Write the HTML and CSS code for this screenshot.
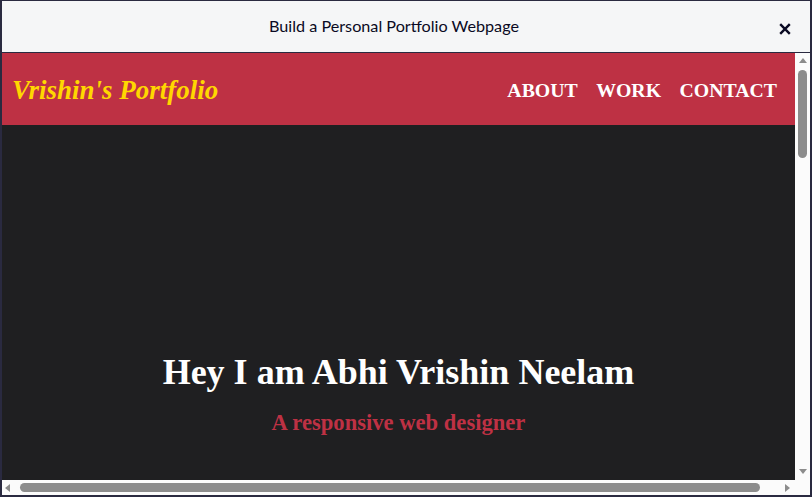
FILE: index.html
```html
<!DOCTYPE html>
<html lang="en">
<head>
<meta charset="utf-8">
<title>Build a Personal Portfolio Webpage</title>
<link rel="stylesheet" href="styles.css">
</head>
<body>
<div class="modal">
  <header class="modal-header">
    <h2 class="modal-title">Build a Personal Portfolio Webpage</h2>
    <button class="close" aria-label="Close">
      <svg width="12" height="12" viewBox="0 0 12 12"><path d="M1.2 1.2 L10.8 10.8 M10.8 1.2 L1.2 10.8" stroke="#0a0a23" stroke-width="2.4" stroke-linecap="butt"/></svg>
    </button>
  </header>
  <div class="frame">
    <div class="viewport">
      <nav class="navbar">
        <span class="logo">Vrishin's Portfolio</span>
        <ul class="nav-list">
          <li><a href="#about">ABOUT</a></li>
          <li><a href="#work">WORK</a></li>
          <li><a href="#contact">CONTACT</a></li>
        </ul>
      </nav>
      <section class="welcome">
        <h1 class="hero-title">Hey I am Abhi Vrishin Neelam</h1>
        <p class="hero-sub">A responsive web designer</p>
      </section>
    </div>
    <div class="vscroll">
      <span class="arrow up"></span>
      <span class="vthumb"></span>
      <span class="arrow down"></span>
    </div>
    <div class="hscroll">
      <span class="arrow left"></span>
      <span class="hthumb"></span>
      <span class="arrow right"></span>
    </div>
    <div class="corner"></div>
  </div>
</div>
</body>
</html>
```

FILE: styles.css
```css
* { box-sizing: border-box; }
html, body { margin: 0; padding: 0; background: #ffffff; }
.modal {
  width: 812px;
  height: 497px;
  border-top: 1px solid #2a2a40;
  border-left: 2px solid #2a2a40;
  border-right: 2px solid #2a2a40;
  border-bottom: 2px solid #2a2a40;
  display: flex;
  flex-direction: column;
  position: relative;
  overflow: hidden;
}
.modal-header {
  height: 52px;
  flex: none;
  background: #f5f6f7;
  border-bottom: 1px solid #2a2a40;
  display: flex;
  align-items: center;
  padding-right: 24px;
}
.modal-title {
  flex: 1;
  margin: 0;
  text-align: center;
  font-family: Lato, "Liberation Sans", sans-serif;
  font-weight: 400;
  font-size: 16.2px;
  color: #0a0a23;
  line-height: 1;
  padding-bottom: 1px;
}
.close {
  position: absolute;
  right: 19px;
  top: 22px;
  width: 12px;
  height: 12px;
  padding: 0;
  border: 0;
  background: transparent;
  display: flex;
}
.frame {
  flex: 1;
  display: grid;
  grid-template-columns: 793px 15px;
  grid-template-rows: 427px 15px;
  background: #ffffff;
}
.viewport {
  overflow: hidden;
  background: #1f1f21;
}
.navbar {
  height: 72px;
  background: #be3144;
  display: flex;
  align-items: center;
  justify-content: space-between;
  padding: 0 18px 0 10px;
}
.logo {
  font-family: "Liberation Serif", serif;
  font-style: italic;
  font-weight: 700;
  font-size: 27px;
  color: #ffd700;
  padding-top: 2px;
}
.nav-list {
  list-style: none;
  margin: 0;
  padding: 0;
  display: flex;
  gap: 18.5px;
  padding-top: 2px;
}
.nav-list a {
  font-family: "Liberation Serif", serif;
  font-weight: 700;
  font-size: 19.8px;
  color: #ffffff;
  text-decoration: none;
}
.welcome {
  padding-top: 226px;
  text-align: center;
  font-family: "Liberation Serif", serif;
  height: 800px;
}
.hero-title {
  margin: 0;
  font-size: 36px;
  font-weight: 700;
  color: #ffffff;
  line-height: 1.2;
}
.hero-sub {
  margin: 15px 0 0;
  font-size: 22.6px;
  font-weight: 700;
  color: #be3144;
  line-height: 1.2;
}
.vscroll {
  background: #fbfbfb;
  display: flex;
  flex-direction: column;
  align-items: center;
  padding: 5px 0 6px;
}
.vthumb {
  width: 9px;
  height: 88px;
  margin-top: 7px;
  border-radius: 5px;
  background: #8c8c8c;
}
.vscroll .down { margin-top: auto; }
.hscroll {
  background: #fbfbfb;
  display: flex;
  align-items: center;
  padding: 0 5px 0 3px;
}
.hthumb {
  width: 740px;
  height: 9px;
  margin-left: 10px;
  border-radius: 5px;
  background: #8c8c8c;
}
.hscroll .right { margin-left: auto; }
.corner { background: #fbfbfb; }
.arrow { width: 0; height: 0; display: block; }
.up { border-left: 4px solid transparent; border-right: 4px solid transparent; border-bottom: 5px solid #8c8c8c; }
.down { border-left: 4px solid transparent; border-right: 4px solid transparent; border-top: 5px solid #8c8c8c; }
.left { border-top: 4px solid transparent; border-bottom: 4px solid transparent; border-right: 5px solid #8c8c8c; }
.right { border-top: 4px solid transparent; border-bottom: 4px solid transparent; border-left: 5px solid #8c8c8c; }
```
